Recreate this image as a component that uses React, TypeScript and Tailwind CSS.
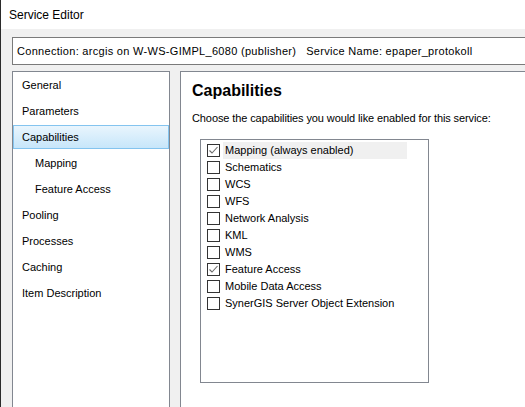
import React from 'react';

const navItems: { label: string; sub?: boolean; selected?: boolean }[] = [
  { label: 'General' },
  { label: 'Parameters' },
  { label: 'Capabilities', selected: true },
  { label: 'Mapping', sub: true },
  { label: 'Feature Access', sub: true },
  { label: 'Pooling' },
  { label: 'Processes' },
  { label: 'Caching' },
  { label: 'Item Description' },
];

const capabilities: { label: string; checked?: boolean; focused?: boolean }[] = [
  { label: 'Mapping (always enabled)', checked: true, focused: true },
  { label: 'Schematics' },
  { label: 'WCS' },
  { label: 'WFS' },
  { label: 'Network Analysis' },
  { label: 'KML' },
  { label: 'WMS' },
  { label: 'Feature Access', checked: true },
  { label: 'Mobile Data Access' },
  { label: 'SynerGIS Server Object Extension' },
];

function CheckBox({ checked }: { checked?: boolean }) {
  return (
    <div className="w-[13px] h-[13px] border border-[#333333] bg-white flex items-center justify-center shrink-0">
      {checked && (
        <svg width="11" height="11" viewBox="0 0 11 11">
          <polyline points="1.5,5.5 4,8 9.5,2" fill="none" stroke="#6b6b6b" strokeWidth="1.1" />
        </svg>
      )}
    </div>
  );
}

export default function App() {
  return (
    <div
      className="w-[525px] h-[407px] bg-[#f0f0f0] border-l border-[#2b2b2b] overflow-hidden flex flex-col text-[11px] text-black"
      style={{ fontFamily: '"Liberation Sans", Arial, sans-serif' }}
    >
      {/* Title bar */}
      <div className="h-[29px] bg-white flex items-center pl-[8px] shrink-0 text-[12px]">Service Editor</div>

      {/* Connection info */}
      <div className="mt-[8px] ml-[11px] w-[560px] h-[28px] shrink-0 bg-white border border-[#7a7a7a] flex items-center pl-[4px] whitespace-nowrap tracking-[0.3px]">
        <span>Connection: arcgis on W-WS-GIMPL_6080 (publisher)</span>
        <span className="ml-[10px]">Service Name: epaper_protokoll</span>
      </div>

      <div className="flex flex-1 mt-[6px] min-h-0">
        {/* Navigation */}
        <div className="ml-[11px] w-[158px] bg-white border border-[#828790] border-b-0 shrink-0">
          {navItems.map((item) => (
            <div key={item.label} className="h-[26px] flex items-center">
              <div
                className={
                  'w-full h-[24px] flex items-center ' +
                  (item.sub ? 'pl-[21px] ' : 'pl-[8px] ') +
                  (item.selected
                    ? 'border border-[#84c4ef] bg-gradient-to-b from-[#e9f5fd] to-[#c7e6fa]'
                    : 'border border-transparent')
                }
              >
                {item.label}
              </div>
            </div>
          ))}
        </div>

        {/* Content */}
        <div className="ml-[10px] flex-1 bg-white border-l border-t border-[#828790] pl-[11px] pt-[8px]">
          <div className="text-[16px] font-bold leading-[22px]">Capabilities</div>
          <div className="mt-[9px] leading-[15px] tracking-[-0.1px]">Choose the capabilities you would like enabled for this service:</div>
          <div className="mt-[13px] ml-[8px] w-[229px] h-[244px] border border-[#828790] pt-[2px]">
            {capabilities.map((c) => (
              <div key={c.label} className="h-[17px] flex items-center pl-[6px]">
                <CheckBox checked={c.checked} />
                <div
                  className={
                    'ml-[3px] h-[17px] flex items-center pl-[2px] whitespace-nowrap ' +
                    (c.focused ? 'bg-[#f0f0f0] w-[184px]' : '')
                  }
                >
                  {c.label}
                </div>
              </div>
            ))}
          </div>
        </div>
      </div>
    </div>
  );
}
